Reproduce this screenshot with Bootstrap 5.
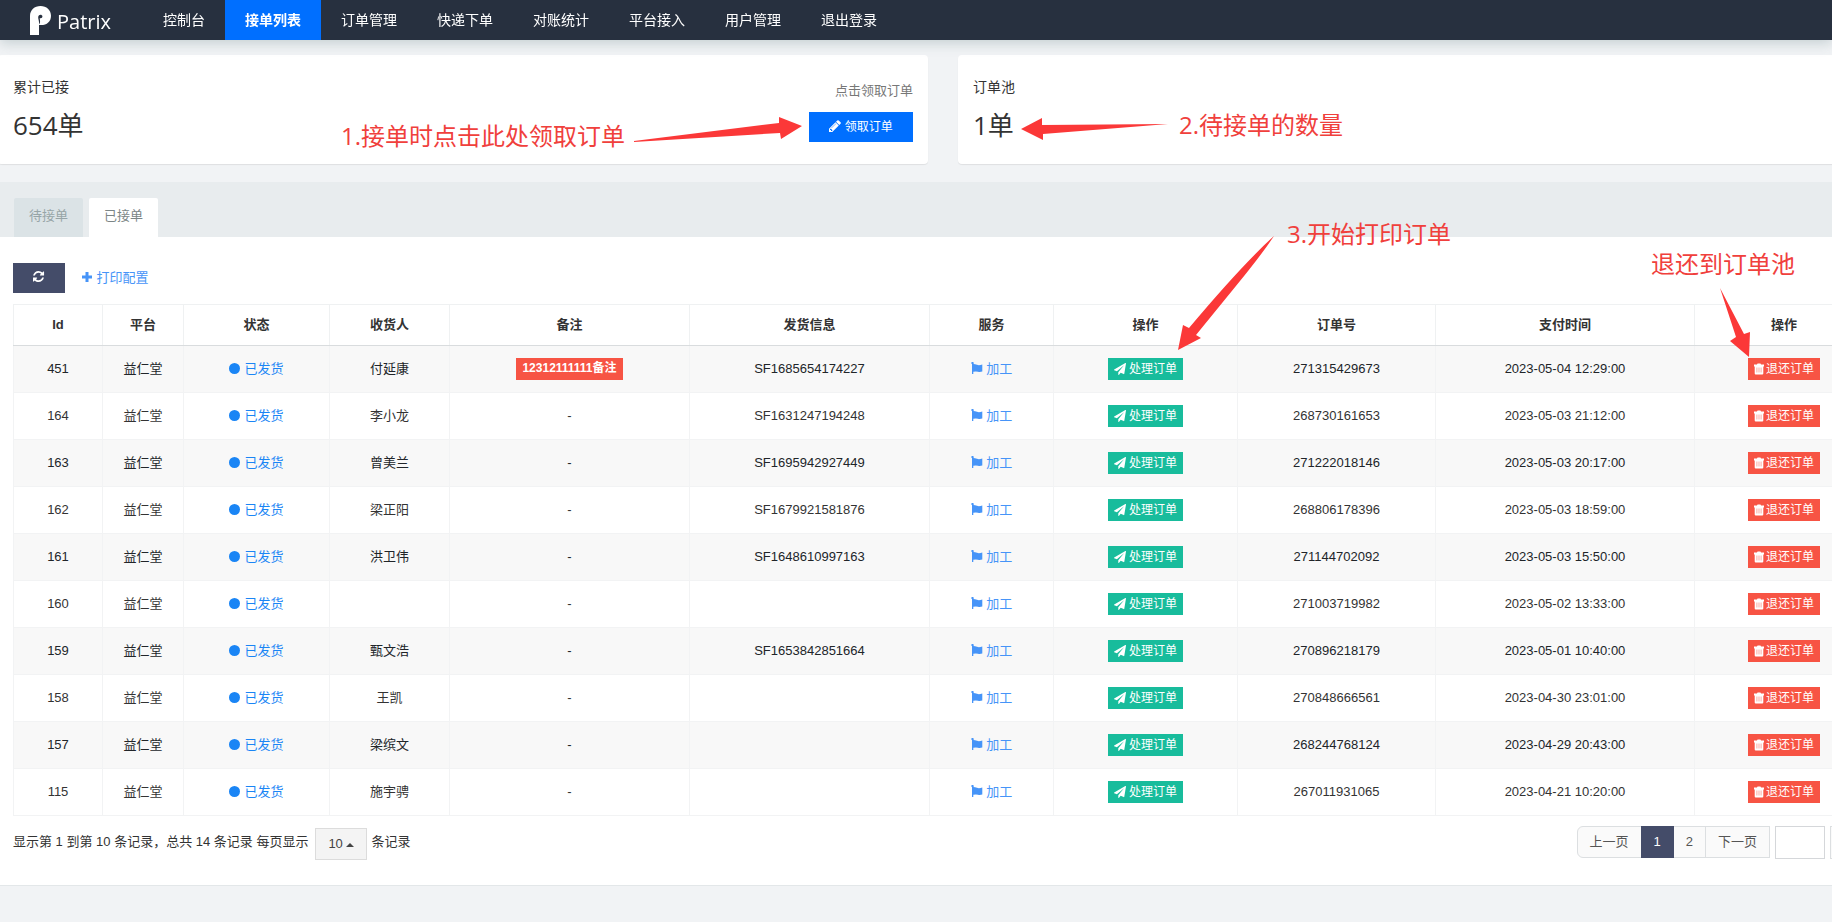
<!DOCTYPE html>
<html lang="zh-CN">
<head>
<meta charset="utf-8">
<meta name="viewport" content="width=device-width, initial-scale=1">
<title>Patrix 接单列表</title>
<link href="https://cdn.jsdelivr.net/npm/bootstrap@5.3.0/dist/css/bootstrap.min.css" rel="stylesheet">
<style>
body{font:13px/20px "Liberation Sans","Noto Sans CJK SC",sans-serif;color:#333;background:#f1f3f5;overflow-x:hidden}
a{text-decoration:none}
.ico{height:12px;width:auto;fill:currentColor;vertical-align:-1px}
.topbar{height:40px;background:#27303f;box-shadow:0 3px 12px rgba(80,110,120,.28);font-size:14px}
.topbar .navbar-brand{width:143px;padding:0 0 0 30px;margin:0;color:#fff;font:20px/36px "Open Sans",sans-serif;gap:6px}
.topbar .navbar-nav .nav-link{padding:0 20px;line-height:40px;color:#fff}
.topbar .navbar-nav .nav-link.active{background:#006fff;font-weight:700;color:#fff}
.wide{margin-left:-2px;width:calc(100% + 58px);padding-top:15px}
.stats{gap:30px;margin-bottom:18px}
.stat{flex:1 1 0;height:109px;background:#fff;border-radius:4px;box-shadow:0 1px 1px rgba(0,0,0,.08);padding:22px 15px 0}
.stat-name{font-size:14px}
.stat-num{font:26px/36px "Open Sans","Noto Sans CJK SC",sans-serif;margin:10px 0 0}
.take-hint{color:#777;margin:4px 0 11px}
.btn{border-radius:0;font-size:12px;line-height:20px}
.take{background:#006fff;color:#fff;width:104px;height:30px;padding:4px 0}
.panel{background:#fff;border-bottom:1px solid #e3e7e9}
.panel-top{background:#e8ecee;padding:16px 16px 0;gap:6px;border:0}
.panel-top .nav-link{border:0;border-radius:2px 2px 0 0;background:#dbe3e6;color:#97a5a7;padding:8px 15px 11px;margin:0}
.panel-top .nav-link.active{background:#fff;color:#7b8586}
.panel-main{padding:26px 15px 25px}
.reload{background:#444c69;color:#fff;width:52px;height:30px;padding:4px 0}
.soft{color:#4694f8}
.orders{table-layout:fixed;margin:11px 0 0;text-align:center;color:#333;border:1px solid #eff1f2;border-collapse:collapse;--bs-table-striped-bg:#f8f8f8}
.orders th{height:41px;padding:0;vertical-align:middle;border:1px solid #eff1f2;border-bottom:1px solid #d9dcde}
.orders td{height:47px;padding:0;vertical-align:middle;border:1px solid #f2f3f4}
.tag{display:inline-block;height:22px;line-height:21px;padding:0 6px;font-size:12px;color:#fff;border:0;vertical-align:middle}
.tag .ico{margin-right:2px;vertical-align:-2px}
.tag-go{background:#18bc9c}
.tag-go .ico{margin-right:3px}
.tag-no{background:#f75444}
.state{color:#1a85f5}
.dot{display:inline-block;width:11px;height:11px;border-radius:50%;background:#1a85f5;vertical-align:-1px;margin-right:4px}
.table-foot{padding-top:10px}
.foot-text{line-height:28px;padding-top:2px}
.size{width:52px;height:32px;padding:0;font-size:13px;background:#f4f4f4;border:1px solid #dcdcdc;color:#444;margin:0 4px 0 7px}
.caret-up{vertical-align:middle}
.pager{gap:5px}
.pagination{--bs-pagination-font-size:13px}
.pagination .page-link{height:32px;padding:5px 12px;line-height:20px;color:#555;background:#fafafa;border-color:#dcdfe1}
.pagination .page-item.active .page-link{background:#444c69;border-color:#444c69;color:#fff}
.jump{width:50px;height:33px;border:1px solid #d5d7da;border-radius:0;padding:4px}
.jump-go{width:43px;height:33px;border:1px solid #dcdfe1;background:#fafafa}
/* guide notes and arrows that lie over the page */
.note{position:absolute;font:24px/32px "Open Sans","Noto Sans CJK SC",sans-serif;color:#f0403c;white-space:nowrap}
.arrow{position:absolute;fill:#fb3838;pointer-events:none}
.note-take{right:303px;top:65px}
.arrow-take{right:126px;top:62px}
.note-pool{left:221px;top:54px}
.arrow-pool{left:63px;top:63px}
.note-print{left:1289px;top:36px}
.arrow-print{left:1180px;top:54px}
.note-return{left:1653px;top:66px}
.arrow-return{left:1722px;top:106px}
</style>
</head>
<body>
<nav class="topbar navbar navbar-expand p-0 sticky-top" aria-label="主导航">
  <a class="navbar-brand d-flex align-items-center" href="#"><svg width="21" height="29" viewBox="0 0 21 29" fill="#fff" aria-hidden="true"><path fill-rule="evenodd" d="M0 29V10C0 4 4.500 0 10.500 0C16.500 0 21 4 21 9.700C21 15.500 17 19 11 19H9V29ZM9 18.500C11 16 9.600 14 9.800 12C10.800 12.800 12.600 12 12.400 10.300C12 8.200 8.600 8.200 8.200 11C8 13 9.500 15 9 18.500Z"/></svg><span class="pt-1">Patrix</span></a>
  <div class="navbar-nav" id="menu"></div>
</nav>
<main class="wide">
  <section class="stats d-flex">
    <div class="stat position-relative d-flex justify-content-between">
      <div><div class="stat-name">累计已接</div><p class="stat-num">654单</p></div>
      <div class="text-end"><div class="take-hint">点击领取订单</div>
        <button class="btn take" type="button"><svg class="ico" viewBox="128 128 1536 1536"><path d="M491 1536l91-91-235-235-91 91v107h128v128h107zm523-928q0-22-22-22-10 0-17 7l-542 542q-7 7-7 17 0 22 22 22 10 0 17-7l542-542q7-7 7-17zm-54-192l416 416-832 832h-416v-416zm683 96q0 53-37 90l-166 166-416-416 166-165q36-38 90-38 53 0 91 38l235 234q37 39 37 91z"/></svg> 领取订单</button></div>
      <span class="note note-take">1.接单时点击此处领取订单</span>
      <svg class="arrow arrow-take" width="168" height="26" viewBox="634 117 168 26"><path d="M634 141L779 123V117L802 126L781 139L780 133L634 142Z"/></svg>
    </div>
    <div class="stat position-relative">
      <div class="stat-name">订单池</div><p class="stat-num">1单</p>
      <svg class="arrow arrow-pool" width="148" height="22" viewBox="1021 118 148 22"><path d="M1021 129L1042 118V125L1168 124L1043 134V140Z"/></svg>
      <span class="note note-pool">2.待接单的数量</span>
    </div>
  </section>
  <section class="panel position-relative">
    <div class="panel-top nav nav-tabs">
      <a class="nav-link" href="#">待接单</a><a class="nav-link active" href="#" aria-current="page">已接单</a>
    </div>
    <div class="panel-main">
      <div class="d-flex align-items-center gap-3">
        <button class="btn reload" type="button" aria-label="刷新"><svg class="ico" viewBox="0 0 1536 1664"><path d="M1511 928q0 5-1 7-64 268-268 434.500t-478 166.500q-146 0-282.500-55t-243.500-157l-129 129q-19 19-45 19t-45-19-19-45v-448q0-26 19-45t45-19h448q26 0 45 19t19 45-19 45l-137 137q71 66 161 102t187 36q134 0 250-65t186-179q11-17 53-117 8-23 30-23h192q13 0 22.500 9.500t9.500 22.500zm25-800v448q0 26-19 45t-45 19h-448q-26 0-45-19t-19-45 19-45l138-138q-148-137-349-137-134 0-250 65t-186 179q-11 17-53 117-8 23-30 23h-199q-13 0-22.500-9.500t-9.500-22.500v-7q65-268 270-434.500t480-166.500q146 0 284 55.500t245 156.500l130-129q19-19 45-19t45 19 19 45z"/></svg></button>
        <a class="soft" href="#"><svg class="ico" viewBox="0 0 12 12"><path d="M4.500 1h3v3.500H11v3H7.500V11h-3V7.500H1v-3h3.500z"/></svg> 打印配置</a>
      </div>
      <table class="orders table table-striped">
        <colgroup id="cols"></colgroup>
        <thead><tr><th scope="col">Id</th><th scope="col">平台</th><th scope="col">状态</th><th scope="col">收货人</th><th scope="col">备注</th><th scope="col">发货信息</th><th scope="col">服务</th><th scope="col">操作</th><th scope="col">订单号</th><th scope="col">支付时间</th><th scope="col">操作</th></tr></thead>
        <tbody id="rows"></tbody>
      </table>
      <div class="table-foot d-flex justify-content-between align-items-start">
        <div class="foot-text d-flex">显示第 1 到第 10 条记录，总共 14 条记录 每页显示
          <button class="size btn" type="button" aria-label="每页条数">10 <svg class="caret-up" width="8" height="4" viewBox="0 0 8 4" fill="currentColor"><path d="M0 4L4 0L8 4Z"/></svg></button>条记录</div>
        <div class="pager d-flex">
          <ul class="pagination mb-0"><li class="page-item"><a class="page-link" href="#">上一页</a></li><li class="page-item active"><a class="page-link" href="#">1</a></li><li class="page-item"><a class="page-link" href="#">2</a></li><li class="page-item"><a class="page-link rounded-0" href="#">下一页</a></li></ul>
          <input class="jump" type="text" aria-label="页码"><button class="jump-go" type="button" aria-label="跳转"></button>
        </div>
      </div>
    </div>
    <svg class="arrow arrow-print" width="96" height="114" viewBox="1178 236 96 114"><path d="M1274 236Q1242 265 1189 328L1183 325L1178 350L1201 338L1196 335L1240 281Q1262 254 1274 236Z"/></svg>
    <span class="note note-print">3.开始打印订单</span>
    <svg class="arrow arrow-return" width="31" height="69" viewBox="1720 288 31 69"><path d="M1720 288L1736 337L1730 341L1749 357L1750 332L1744 334Z"/></svg>
    <span class="note note-return">退还到订单池</span>
  </section>
</main>
<script src="https://cdn.jsdelivr.net/npm/bootstrap@5.3.0/dist/js/bootstrap.bundle.min.js"></script>
<script>
document.getElementById('menu').innerHTML = ['控制台','接单列表','订单管理','快递下单','对账统计','平台接入','用户管理','退出登录']
  .map((t, i) => `<a class="nav-link${i === 1 ? ' active' : ''}" href="#">${t}</a>`).join('');
document.getElementById('cols').innerHTML = [89,81,146,120,240,240,124,184,198,259,179]
  .map(w => `<col style="width:${w}px">`).join('');
const plane = '<svg class="ico" viewBox="0 0 1792 1792"><path d="M1764 11q33 24 27 64l-256 1536q-5 29-32 45-14 8-31 8-11 0-24-5l-453-185-242 295q-18 23-49 23-13 0-22-4-19-7-30.500-23.500t-11.500-36.500v-349l864-1059-1069 925-395-162q-37-14-40-55-2-40 32-59l1664-960q15-9 32-9 20 0 36 11z"/></svg>';
const trash = '<svg class="ico" viewBox="0 0 10 12"><path fill-rule="evenodd" d="M3 1.500Q3 .5 4 .5h2q1 0 1 1h3v2H9.300V10.500Q9.300 11.500 8.300 11.500H1.700Q.7 11.500 .7 10.500V3.500H0v-2zM2.700 4.500v5h.5v-5zM4.750 4.500v5h.5v-5zM6.800 4.500v5h.5v-5z"/></svg>';
const flag = '<svg class="ico" viewBox="0 0 12 12"><path d="M.3 1.200a1.200 1.200 0 1 1 2.100 .8Q4 2 6 2.800T11.300 2.500v7Q9 10.300 7 9.800T2.300 9.800V12H1V2Q.3 1.800 .3 1.200z"/></svg>';
const data = [
  ['451','付延康','SF1685654174227','271315429673','2023-05-04 12:29:00','12312111111备注'],
  ['164','李小龙','SF1631247194248','268730161653','2023-05-03 21:12:00'],
  ['163','曾美兰','SF1695942927449','271222018146','2023-05-03 20:17:00'],
  ['162','梁正阳','SF1679921581876','268806178396','2023-05-03 18:59:00'],
  ['161','洪卫伟','SF1648610997163','271144702092','2023-05-03 15:50:00'],
  ['160','','','271003719982','2023-05-02 13:33:00'],
  ['159','甄文浩','SF1653842851664','270896218179','2023-05-01 10:40:00'],
  ['158','王凯','','270848666561','2023-04-30 23:01:00'],
  ['157','梁缤文','','268244768124','2023-04-29 20:43:00'],
  ['115','施宇骋','','267011931065','2023-04-21 10:20:00']];
document.getElementById('rows').innerHTML = data.map(([id, who, sf, no, time, memo]) => `<tr>
<td>${id}</td><td>益仁堂</td><td><a class="state" href="#"><span class="dot"></span>已发货</a></td><td>${who}</td>
<td>${memo ? `<span class="tag tag-no fw-bold">${memo}</span>` : '-'}</td><td>${sf}</td>
<td><a class="soft" href="#">${flag} 加工</a></td><td><button class="tag tag-go" type="button">${plane}处理订单</button></td>
<td>${no}</td><td>${time}</td><td><button class="tag tag-no" type="button">${trash}退还订单</button></td></tr>`).join('');
</script>
</body>
</html>
